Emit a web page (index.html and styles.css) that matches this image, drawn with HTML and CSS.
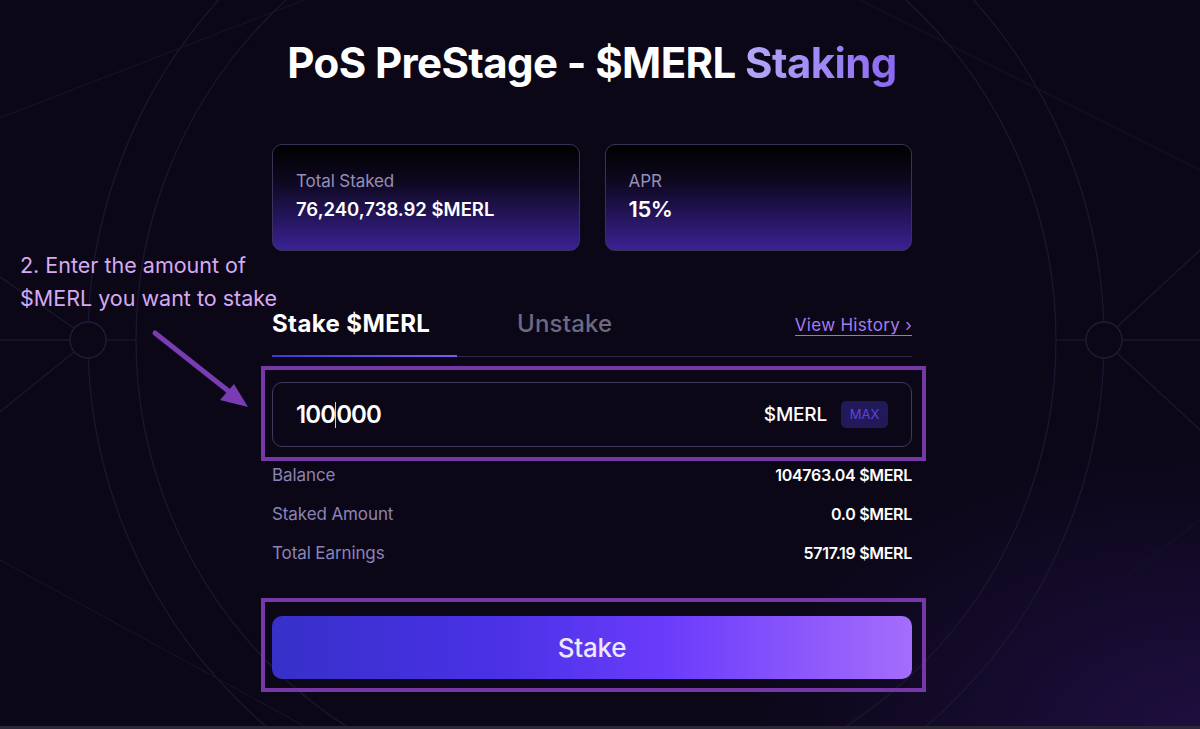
FILE: index.html
```html
<!DOCTYPE html>
<html lang="en">
<head>
<meta charset="utf-8">
<title>PoS PreStage - $MERL Staking</title>
<link rel="stylesheet" href="styles.css">
</head>
<body>
<div class="page">
  <svg class="backdrop" width="1200" height="729" viewBox="0 0 1200 729" aria-hidden="true">
    <g fill="none" stroke="#1c1631" stroke-width="1.3">
      <circle cx="596" cy="340" r="508"/>
      <circle cx="596" cy="340" r="460"/>
      <line x1="0" y1="340" x2="70" y2="340"/>
      <line x1="106" y1="340" x2="136" y2="340"/>
      <line x1="1056" y1="340" x2="1086" y2="340"/>
      <line x1="1122" y1="340" x2="1200" y2="340"/>
      <line x1="74" y1="328" x2="-10" y2="270"/>
      <line x1="74" y1="352" x2="-10" y2="420"/>
      <line x1="1117" y1="327" x2="1200" y2="250"/>
      <line x1="1117" y1="353" x2="1200" y2="430"/>
    </g>
    <g fill="none" stroke="#16112a" stroke-width="1.2">
      <line x1="0" y1="118" x2="330" y2="-10"/>
      <line x1="860" y1="0" x2="1200" y2="170"/>
      <line x1="0" y1="560" x2="330" y2="740"/>
      <line x1="930" y1="729" x2="1200" y2="520"/>
    </g>
    <g fill="#0b0717" stroke="#221c3a" stroke-width="1.3">
      <circle cx="88" cy="340" r="18"/>
      <circle cx="1104" cy="340" r="18"/>
    </g>
  </svg>

  <main class="content">
    <h1 class="title">PoS PreStage - $MERL <span class="accent">Staking</span></h1>

    <section class="stats">
      <div class="card">
        <div class="card-label">Total Staked</div>
        <div class="card-value">76,240,738.92 $MERL</div>
      </div>
      <div class="card">
        <div class="card-label">APR</div>
        <div class="card-value big">15%</div>
      </div>
    </section>

    <nav class="tabs">
      <div class="tab active">Stake $MERL</div>
      <div class="tab">Unstake</div>
      <a class="history" href="#">View History ›</a>
    </nav>

    <div class="highlight hl-input">
      <div class="input">
        <div class="amount">100<span class="caret"></span>000</div>
        <div class="unit">$MERL</div>
        <div class="max">MAX</div>
      </div>
    </div>

    <div class="rows">
      <div class="row"><span class="label">Balance</span><span class="value">104763.04 $MERL</span></div>
      <div class="row"><span class="label">Staked Amount</span><span class="value">0.0 $MERL</span></div>
      <div class="row"><span class="label">Total Earnings</span><span class="value">5717.19 $MERL</span></div>
    </div>

    <div class="highlight hl-button">
      <button class="stake-btn" type="button">Stake</button>
    </div>
  </main>

  <div class="annotation">
    <p class="note">2. Enter the amount of<br>$MERL you want to stake</p>
    <svg class="arrow" width="110" height="90" viewBox="0 0 110 90" aria-hidden="true">
      <line x1="5" y1="5" x2="86" y2="69" stroke="#7a3cb2" stroke-width="5" stroke-linecap="round"/>
      <polygon points="98,79 70,72 84,56" fill="#7a3cb2"/>
    </svg>
  </div>
</div>
</body>
</html>
```

FILE: styles.css
```css
* { box-sizing: border-box; }

html, body {
  margin: 0;
  padding: 0;
  background: #0b0717;
  overflow: hidden;
}

.page {
  position: relative;
  width: 1200px;
  height: 729px;
  overflow: hidden;
  background:
    radial-gradient(ellipse 460px 280px at 1200px 729px, rgba(70, 30, 150, 0.32), rgba(70, 30, 150, 0) 100%),
    #0b0717;
  border-bottom: 3px solid #2a2836;
  font-family: "Inter", "Noto Sans", sans-serif;
  color: #ffffff;
}

.backdrop {
  position: absolute;
  left: 0;
  top: 0;
  z-index: 0;
}

.content {
  position: relative;
  z-index: 1;
  width: 640px;
  margin-left: 272px;
  padding-top: 39px;
}

.title {
  margin: 0;
  height: 48px;
  line-height: 48px;
  text-align: center;
  font-size: 42px;
  font-weight: 700;
  letter-spacing: -0.6px;
  color: #ffffff;
}

.accent {
  background: linear-gradient(90deg, #b4a8f8, #8a68f2);
  -webkit-background-clip: text;
  background-clip: text;
  color: transparent;
}

.stats {
  margin-top: 57px;
  display: grid;
  grid-template-columns: 1fr 1fr;
  gap: 25px;
}

.card {
  height: 107px;
  border-radius: 10px;
  border: 1px solid #3a3358;
  background: linear-gradient(180deg, #000000 0%, #0e0820 35%, #3a2294 100%);
  padding: 25px 23px 0;
}

.card-label {
  font-size: 17px;
  line-height: 22px;
  color: #958fb8;
  letter-spacing: -0.1px;
}

.card-value {
  margin-top: 5px;
  font-size: 18.5px;
  line-height: 24px;
  font-weight: 600;
  letter-spacing: 0;
}

.card-value.big {
  font-size: 22px;
  letter-spacing: -0.4px;
}

.tabs {
  margin-top: 58px;
  display: flex;
  align-items: flex-start;
  border-bottom: 1px solid #2f2a48;
}

.tab {
  font-size: 24px;
  line-height: 30px;
  padding-bottom: 16px;
  border-bottom: 2px solid transparent;
  margin-bottom: -1px;
  color: #6d6982;
  font-weight: 500;
  letter-spacing: 0.2px;
}

.tab.active {
  width: 185px;
  color: #ffffff;
  font-weight: 700;
  letter-spacing: 0.4px;
  border-image: linear-gradient(90deg, #3d3ad8, #7a5cf5) 1;
}

.tab + .tab {
  margin-left: 60px;
}

.history {
  margin-left: auto;
  margin-top: 6px;
  font-size: 17px;
  line-height: 20px;
  color: #a37cf2;
  text-decoration: none;
  border-bottom: 1px solid #9a6cf0;
  letter-spacing: 0.3px;
}

.highlight {
  position: relative;
}

.highlight::after {
  content: "";
  position: absolute;
  left: -11px;
  right: -14px;
  top: -16px;
  bottom: -14px;
  border: 4px solid #7637a8;
  pointer-events: none;
}

.hl-input {
  margin-top: 25px;
}

.input {
  height: 65px;
  border-radius: 10px;
  border: 1px solid #3f3a5c;
  display: flex;
  align-items: center;
  padding: 0 23px 0 23px;
}

.amount {
  font-size: 24px;
  font-weight: 600;
  letter-spacing: -0.9px;
  display: flex;
  align-items: center;
}

.caret {
  display: inline-block;
  width: 1px;
  height: 26px;
  background: #cfcbe0;
}

.unit {
  margin-left: auto;
  font-size: 19px;
  font-weight: 500;
  letter-spacing: -0.2px;
}

.max {
  margin-left: 14px;
  width: 47px;
  height: 27px;
  border-radius: 5px;
  background: #221958;
  color: #5a45df;
  font-size: 13px;
  line-height: 27px;
  text-align: center;
}

.rows {
  margin-top: 8px;
}

.row {
  height: 39px;
  display: flex;
  align-items: center;
  justify-content: space-between;
}

.label {
  font-size: 17px;
  color: #8b83b6;
  letter-spacing: -0.1px;
}

.value {
  font-size: 16px;
  font-weight: 600;
  letter-spacing: -0.3px;
}

.hl-button {
  margin-top: 44px;
}

.hl-button::after {
  top: -18px;
  bottom: -13px;
}

.stake-btn {
  display: block;
  width: 100%;
  height: 63px;
  border: 0;
  border-radius: 10px;
  background: linear-gradient(90deg, #3730c9 0%, #4a31e6 35%, #6b3cfb 62%, #a56dfb 100%);
  color: #ece6ff;
  font-family: inherit;
  font-size: 26px;
  font-weight: 500;
  letter-spacing: -0.3px;
  cursor: pointer;
}

.annotation {
  position: absolute;
  left: 20px;
  top: 249px;
  z-index: 2;
}

.note {
  margin: 0;
  font-size: 21.5px;
  line-height: 33px;
  color: #d6a9f2;
  letter-spacing: 0;
}

.arrow {
  position: absolute;
  left: 130px;
  top: 79px;
}
```
